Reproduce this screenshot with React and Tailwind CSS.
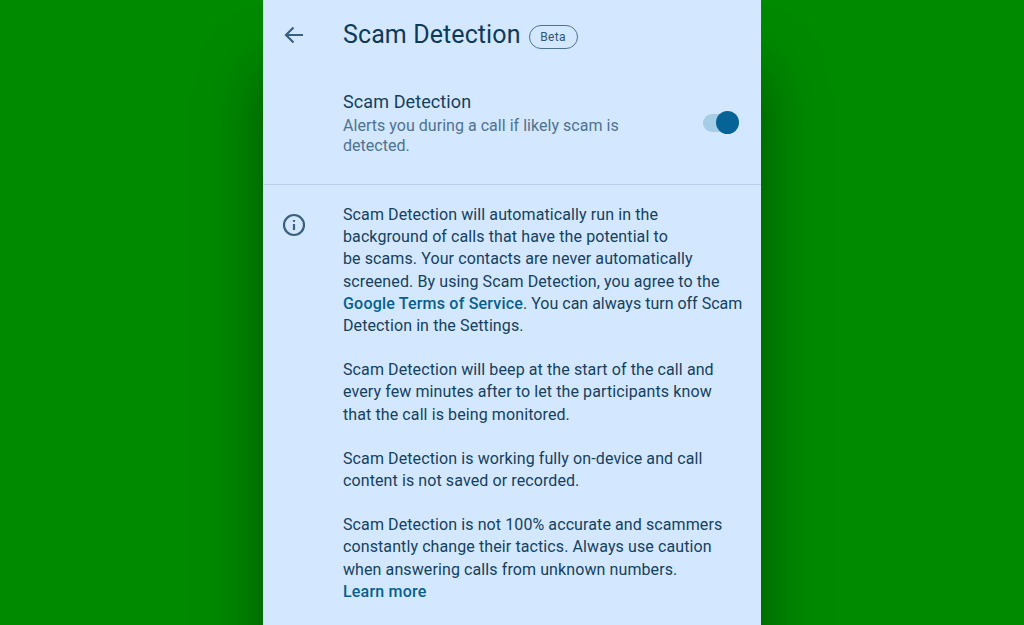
import React from 'react';

const paragraphClass = "text-[16px] leading-[22.2px] text-[#15405e] tracking-[0.1px]";
const linkClass = "font-medium text-[#05608f] tracking-[0.2px]";

const App = () => {
  return (
    <div className="h-[625px] w-[1024px] overflow-hidden bg-[#008a00] flex justify-center font-['Roboto',sans-serif]">
      <div className="w-[498px] h-[625px] bg-[#d3e8ff] shadow-[0_70px_60px_rgba(0,0,0,0.4)] flex flex-col">

        {/* Header */}
        <div className="flex items-center h-[70px] pl-[19px]">
          <svg width="24" height="24" viewBox="0 0 24 24" fill="none" stroke="#3a607f" strokeWidth="2.2">
            <path d="M21 12H4.5M11.5 4.5 4 12l7.5 7.5" />
          </svg>
          <span className="ml-[37px] text-[25px] text-[#0e3a5a] tracking-[0.1px]">Scam Detection</span>
          <span className="ml-[8px] mt-[3px] h-[24px] w-[49px] flex items-center justify-center rounded-full border-[1.5px] border-[#4d7391] text-[12px] text-[#2f5676] tracking-[0.3px]">
            Beta
          </span>
        </div>

        {/* Toggle row */}
        <div className="flex items-start justify-between h-[115px] pl-[80px] pr-[23px] pt-[20px] border-b border-[#b9cfe4]">
          <div className="w-[310px]">
            <p className="text-[18px] leading-[24px] text-[#15405e] tracking-[0.1px]">Scam Detection</p>
            <p className="mt-[2px] text-[16px] leading-[20px] text-[#4f7290] tracking-[0.03px]">
              Alerts you during a call if likely scam is detected.
            </p>
          </div>
          <div className="relative mt-[24px] w-[35px] h-[18px] rounded-full bg-[#a5cde6]">
            <div className="absolute -right-[1px] -top-[3px] w-[23px] h-[23px] rounded-full bg-[#056495]" />
          </div>
        </div>

        {/* Body */}
        <div className="flex pl-[19px] pt-[19px]">
          <svg className="mt-[9px] shrink-0" width="24" height="24" viewBox="0 0 24 24" fill="none" stroke="#3a607f" strokeWidth="2.2">
            <circle cx="12" cy="12" r="10" />
            <path d="M12 11v6" />
            <path d="M12 7v1.8" />
          </svg>
          <div className="ml-[37px] flex flex-col gap-[22px]">
            <p className={paragraphClass}>
              Scam Detection will automatically run in the<br />
              background of calls that have the potential to<br />
              be scams. Your contacts are never automatically<br />
              screened. By using Scam Detection, you agree to the<br />
              <span className={linkClass}>Google Terms of Service</span><span className="tracking-[0px]">. You can always turn off Scam</span><br />
              Detection in the Settings.
            </p>
            <p className={paragraphClass}>
              Scam Detection will beep at the start of the call and<br />
              every few minutes after to let the participants know<br />
              that the call is being monitored.
            </p>
            <p className={paragraphClass}>
              Scam Detection is working fully on-device and call<br />
              content is not saved or recorded.
            </p>
            <p className={paragraphClass}>
              Scam Detection is not 100% accurate and scammers<br />
              constantly change their tactics. Always use caution<br />
              when answering calls from unknown numbers.<br />
              <span className={linkClass}>Learn more</span>
            </p>
          </div>
        </div>

      </div>
    </div>
  );
};

export default App;
